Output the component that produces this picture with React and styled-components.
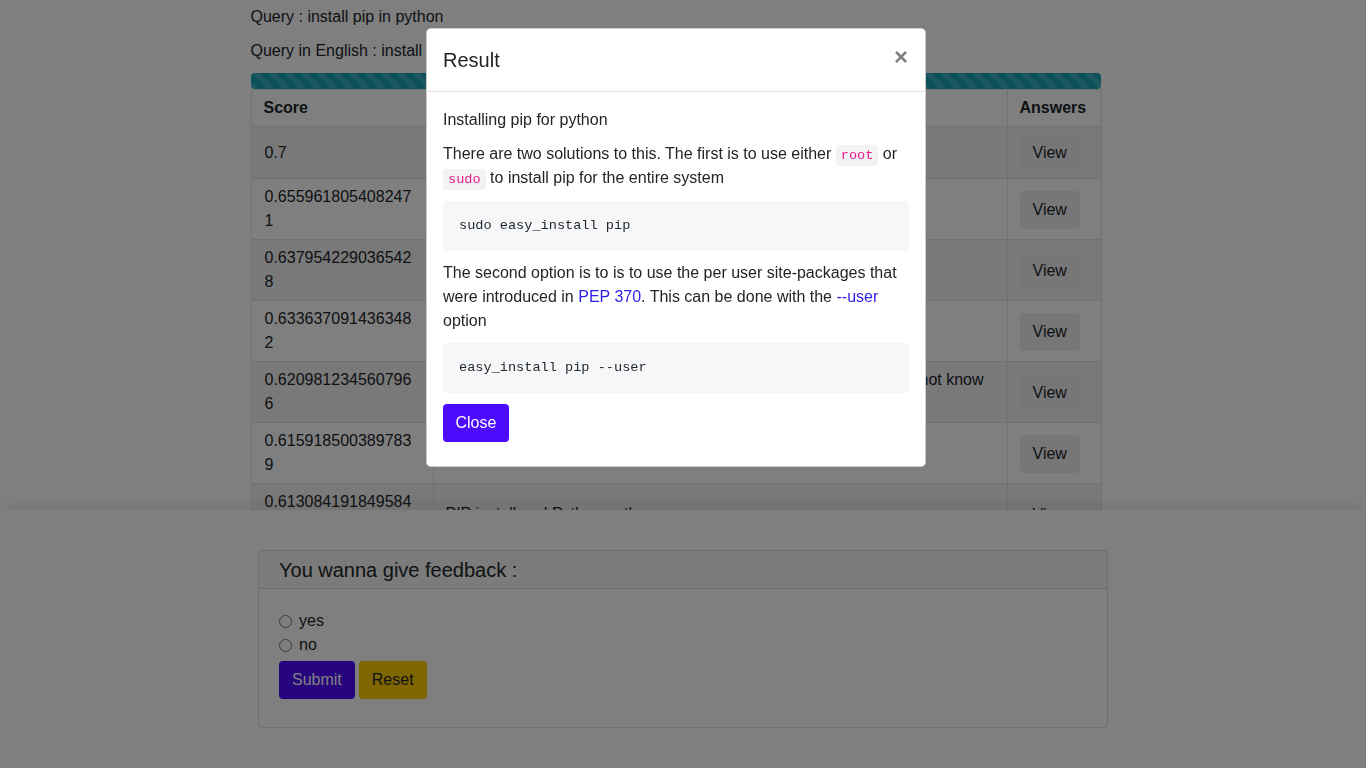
import React from 'react';
import styled, { createGlobalStyle } from 'styled-components';

const GlobalStyle = createGlobalStyle`
  html, body {
    margin: 0;
    padding: 0;
    background: #fff;
  }

  body {
    font-family: "Liberation Sans", Arial, sans-serif;
    font-size: 16px;
    line-height: 1.5;
    color: #212529;
  }

  * {
    box-sizing: border-box;
  }
`;

const colors = {
  text: '#212529',
  border: '#dee2e6',
  primary: '#4c0bff',
  link: '#2e1fe8',
  info: '#17a2b8',
  yellow: '#ffcc00',
};

const TopSection = styled.div`
  height: 510px;
  overflow: hidden;
  padding-right: 15px;
`;

const Container = styled.div`
  width: 850px;
  margin: 0 auto;
  padding-top: 5px;
`;

const QueryLine = styled.p`
  margin: 0 0 10px 0;
`;

const Progress = styled.div`
  height: 16px;
  margin-top: 10px;
  border-radius: 4px;
  background-color: ${colors.info};
  background-image: linear-gradient(
    45deg,
    rgba(255, 255, 255, 0.15) 25%,
    transparent 25%,
    transparent 50%,
    rgba(255, 255, 255, 0.15) 50%,
    rgba(255, 255, 255, 0.15) 75%,
    transparent 75%,
    transparent
  );
  background-size: 16px 16px;
`;

const Table = styled.table`
  width: 850px;
  table-layout: fixed;
  border-collapse: collapse;

  th,
  td {
    border: 1px solid ${colors.border};
    padding: 6px 12px;
    text-align: left;
    vertical-align: middle;
  }

  th {
    font-weight: 700;
  }

  tbody tr:nth-child(odd) {
    background: rgba(0, 0, 0, 0.05);
  }
`;

const ScoreCell = styled.td`
  word-break: break-all;

  && {
    padding-left: 13px;
    padding-right: 20px;
  }
`;

const ViewButton = styled.button`
  display: block;
  height: 38px;
  margin: 1px 0 0 0;
  padding: 6px 13px;
  border: none;
  border-radius: 4px;
  background: #efefef;
  color: ${colors.text};
  font-family: inherit;
  font-size: 16px;
  line-height: 24px;
`;

const BottomSection = styled.div`
  position: relative;
  padding: 40px 0 40px 0;
  background: #fff;
  box-shadow: 0 -6px 12px rgba(0, 0, 0, 0.06);
`;

const Card = styled.div`
  width: 850px;
  margin: 0 auto;
  border: 1px solid rgba(0, 0, 0, 0.125);
  border-radius: 4px;
`;

const CardHeader = styled.div`
  padding: 6px 20px 5px 20px;
  font-size: 20px;
  line-height: 26px;
  background: rgba(0, 0, 0, 0.03);
  border-bottom: 1px solid rgba(0, 0, 0, 0.125);
`;

const CardBody = styled.div`
  padding: 20px 20px 28px 20px;
`;

const RadioRow = styled.label`
  display: flex;
  align-items: center;
  gap: 7px;
  line-height: 24px;

  input {
    margin: 0;
    width: 13px;
    height: 13px;
  }
`;

const ButtonRow = styled.div`
  display: flex;
  gap: 4px;
  margin-top: 4px;
`;

const Button = styled.button`
  height: 38px;
  padding: 6px 13px;
  border: none;
  border-radius: 4px;
  background: ${(p) => p.bg};
  color: ${(p) => p.fg};
  font-family: inherit;
  font-size: 16px;
  line-height: 24px;
`;

const Backdrop = styled.div`
  position: fixed;
  inset: 0;
  z-index: 10;
  background: rgba(0, 0, 0, 0.5);
  display: flex;
  justify-content: center;
  align-items: flex-start;
  padding: 28px 14px 0 0;
`;

const ModalContent = styled.div`
  width: 500px;
  background: #fff;
  border: 1px solid rgba(0, 0, 0, 0.2);
  border-radius: 5px;
`;

const ModalHeader = styled.div`
  display: flex;
  align-items: flex-start;
  justify-content: space-between;
  padding: 16px;
  border-bottom: 1px solid #e3e1ea;
`;

const ModalTitle = styled.h5`
  margin: 0;
  font-size: 20px;
  font-weight: 500;
  line-height: 30px;
`;

const CloseX = styled.span`
  font-size: 24px;
  font-weight: 700;
  line-height: 24px;
  color: #000;
  opacity: 0.5;
  margin-right: 1px;
`;

const ModalBody = styled.div`
  padding: 16px 16px 24px 16px;

  p {
    margin: 0 0 10px 0;
  }

  a {
    color: ${colors.link};
    text-decoration: none;
  }
`;

const InlineCode = styled.code`
  font-family: "Liberation Mono", monospace;
  font-size: 13.6px;
  color: #e8198c;
  background: #f3f3f4;
  border-radius: 4px;
  padding: 3px 5px;
`;

const Pre = styled.pre`
  margin: 0 0 10px 0;
  padding: 16px;
  background: #f6f7f9;
  border-radius: 4px;
  font-family: "Liberation Mono", monospace;
  font-size: 13.6px;
  line-height: 18px;
  color: #24292e;
`;

const CloseButton = styled.button`
  height: 38px;
  margin-top: 1px;
  padding: 6px 12.5px;
  border: none;
  border-radius: 4px;
  background: ${colors.primary};
  color: #fff;
  font-family: inherit;
  font-size: 16px;
  line-height: 24px;
`;

const rows = [
  { score: '0.7', question: 'How do I install pip on macOS or OS X?' },
  { score: '0.6559618054082471', question: 'How to install pip with Python 3?' },
  { score: '0.6379542290365428', question: 'Installing pip packages to $HOME folder' },
  { score: '0.6336370914363482', question: 'How to install pip for Python 2.7?' },
  {
    score: '0.6209812345607966',
    question:
      'pip install fails with permission denied as I have no root rights, I do not know what to do',
  },
  { score: '0.6159185003897839', question: 'Installing Python packages without pip' },
  { score: '0.6130841918495841', question: 'PIP install and Python path' },
];

export default function App() {
  return (
    <>
      <GlobalStyle />
      <TopSection>
        <Container>
          <QueryLine>Query : install pip in python</QueryLine>
          <QueryLine>Query in English : install pip in python</QueryLine>
          <Progress />
          <Table>
            <colgroup>
              <col style={{ width: 182 }} />
              <col style={{ width: 574 }} />
              <col style={{ width: 94 }} />
            </colgroup>
            <thead>
              <tr>
                <th>Score</th>
                <th>Question</th>
                <th>Answers</th>
              </tr>
            </thead>
            <tbody>
              {rows.map((r) => (
                <tr key={r.score}>
                  <ScoreCell>{r.score}</ScoreCell>
                  <td>{r.question}</td>
                  <td>
                    <ViewButton>View</ViewButton>
                  </td>
                </tr>
              ))}
            </tbody>
          </Table>
        </Container>
      </TopSection>

      <BottomSection>
        <Card>
          <CardHeader>You wanna give feedback :</CardHeader>
          <CardBody>
            <RadioRow>
              <input type="radio" name="feedback" value="yes" />
              yes
            </RadioRow>
            <RadioRow>
              <input type="radio" name="feedback" value="no" />
              no
            </RadioRow>
            <ButtonRow>
              <Button bg={colors.primary} fg="#fff">
                Submit
              </Button>
              <Button bg={colors.yellow} fg={colors.text}>
                Reset
              </Button>
            </ButtonRow>
          </CardBody>
        </Card>
      </BottomSection>

      <Backdrop>
        <ModalContent>
          <ModalHeader>
            <ModalTitle>Result</ModalTitle>
            <CloseX>×</CloseX>
          </ModalHeader>
          <ModalBody>
            <p>Installing pip for python</p>
            <p>
              There are two solutions to this. The first is to use either <InlineCode>root</InlineCode> or{' '}
              <InlineCode>sudo</InlineCode> to install pip for the entire system
            </p>
            <Pre>sudo easy_install pip</Pre>
            <p>
              The second option is to is to use the per user site-packages that were introduced in{' '}
              <a href="#">PEP 370</a>. This can be done with the <a href="#">--user</a> option
            </p>
            <Pre>easy_install pip --user</Pre>
            <CloseButton>Close</CloseButton>
          </ModalBody>
        </ModalContent>
      </Backdrop>
    </>
  );
}
